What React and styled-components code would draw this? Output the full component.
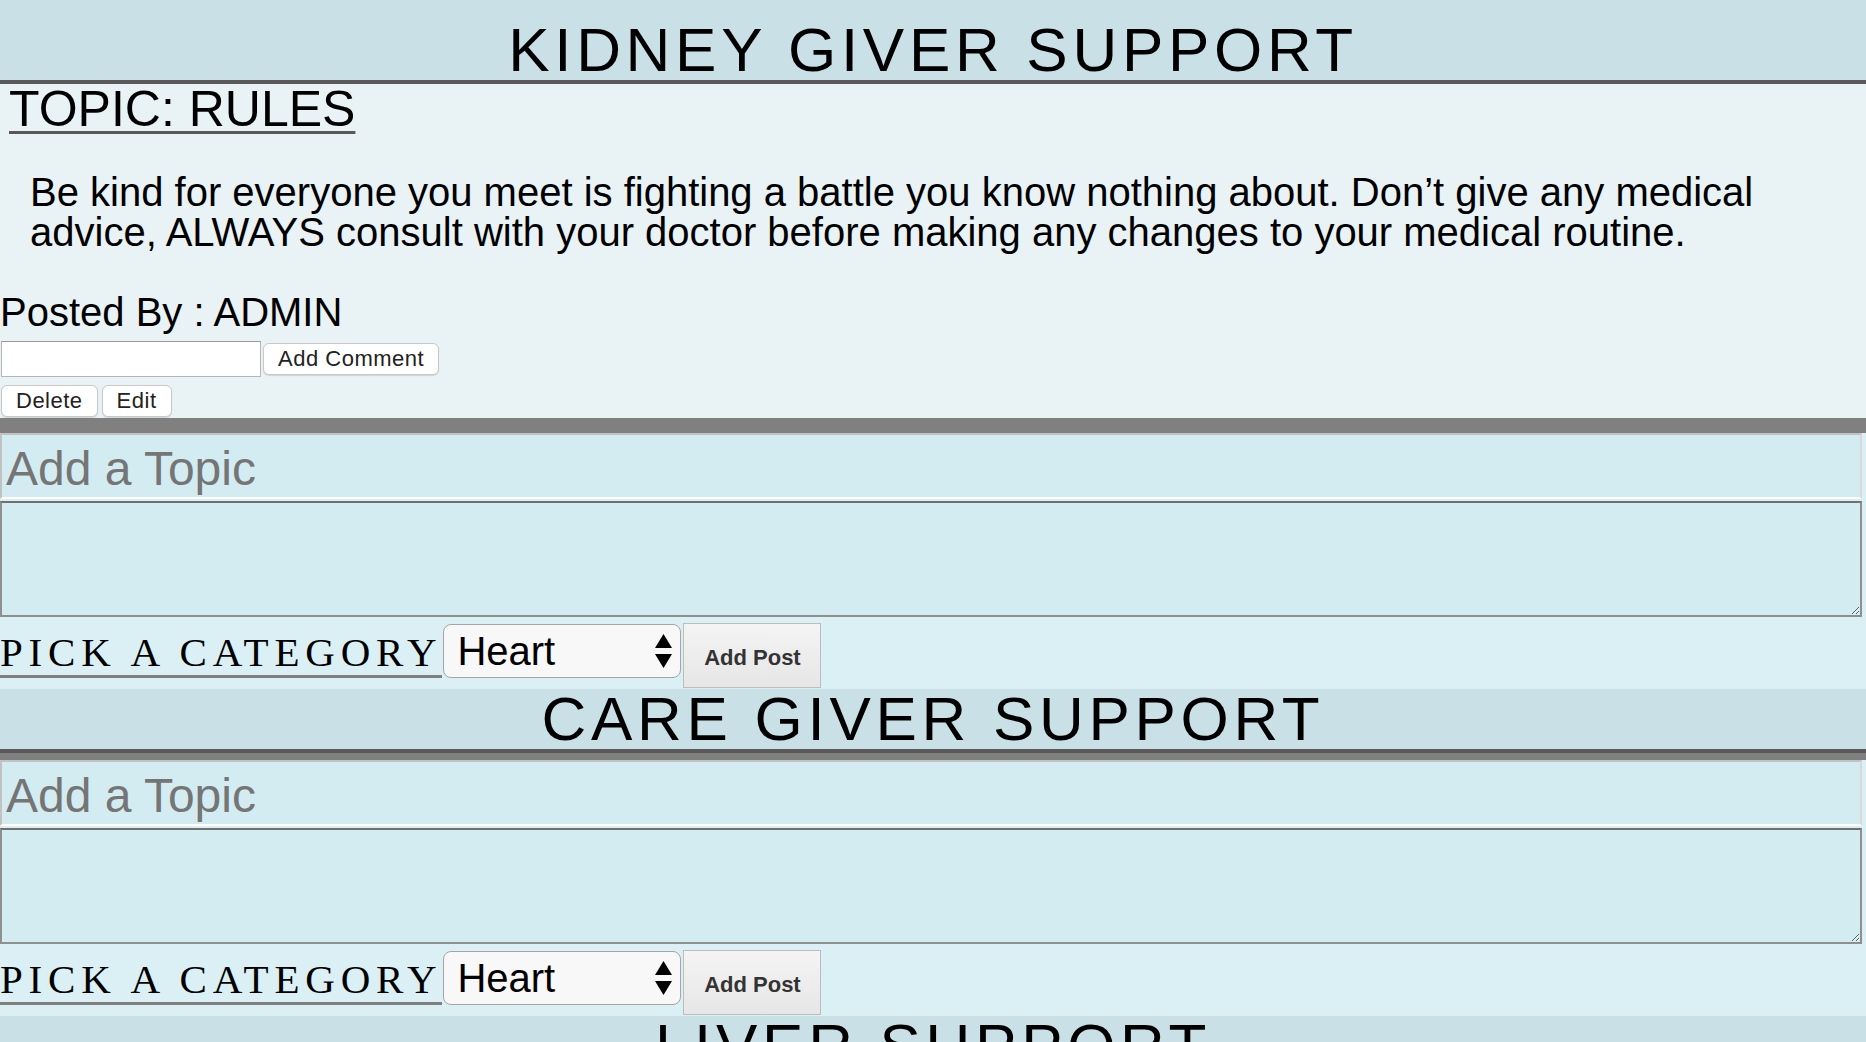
import React from 'react';
import styled, { createGlobalStyle } from 'styled-components';

const GlobalStyle = createGlobalStyle`
  body {
    margin: 0;
    background: #dbf0f5;
    font-family: "Liberation Sans", Arial, sans-serif;
    color: #000;
  }
`;

const sections = [
  {
    title: 'KIDNEY GIVER SUPPORT',
    posts: [
      {
        topic: 'TOPIC: RULES',
        body: 'Be kind for everyone you meet is fighting a battle you know nothing about. Don’t give any medical advice, ALWAYS consult with your doctor before making any changes to your medical routine.',
        author: 'ADMIN',
      },
    ],
  },
  { title: 'CARE GIVER SUPPORT', posts: [] },
  { title: 'LIVER SUPPORT', posts: [] },
];

const categories = ['Heart', 'Kidney', 'Liver', 'Lung', 'Other'];

const SectionHeader = styled.h1`
  margin: 0;
  padding-top: ${(p) => (p.$first ? '20px' : '0')};
  background: #c8e0e6;
  border-bottom: 4px solid #5a5858;
  text-align: center;
  font-size: 62px;
  font-weight: 400;
  line-height: 60px;
  letter-spacing: 4.7px;
`;

const Post = styled.article`
  background: #e9f2f5;
  border-bottom: 8px solid #808080;
  padding-bottom: 1px;
`;

const TopicTitle = styled.h2`
  margin: 0 0 0 9px;
  font-size: 50px;
  font-weight: 400;
  line-height: 50px;
  text-decoration: underline;
  text-decoration-thickness: 3px;
  text-decoration-color: #5a5858;
  text-underline-offset: 5px;
`;

const Rules = styled.p`
  margin: 38px 0 37px;
  padding: 0 30px;
  font-size: 40px;
  line-height: 40px;
`;

const PostedBy = styled.h3`
  margin: 0 0 6px;
  font-size: 40px;
  font-weight: 400;
  line-height: 46px;
`;

const CommentRow = styled.div`
  display: flex;
  align-items: center;
  gap: 2px;
  padding-left: 1px;
`;

const CommentInput = styled.input`
  box-sizing: border-box;
  width: 260px;
  height: 36px;
  margin: 0;
  border: 1px solid #b5b5b5;
  border-top-color: #9a9a9a;
  background: #fff;
`;

const SmallButton = styled.button`
  box-sizing: border-box;
  height: 32px;
  padding: 0 14px;
  border: 1px solid #c9c9c9;
  border-radius: 6px;
  background: #fff;
  box-shadow: 0 1px 1px rgba(0, 0, 0, 0.12);
  font-family: "Liberation Sans", Arial, sans-serif;
  font-size: 22px;
  letter-spacing: 0.5px;
  color: #222;
`;

const Actions = styled.div`
  display: flex;
  gap: 4px;
  margin-top: 8px;
  padding-left: 1px;
`;

const TopicForm = styled.form`
  border-top: 7px solid #808080;
  background: #dbf0f5;
  padding-bottom: 1px;
`;

const TopicInput = styled.input`
  display: block;
  box-sizing: border-box;
  width: calc(100% - 4px);
  height: 66px;
  margin: 0 0 2px;
  padding: 4px 4px 0;
  border: 2px solid;
  border-color: #c2c2c2 #d8d8d8 #fff #c2c2c2;
  background: #d3ecf1;
  font-family: "Liberation Sans", Arial, sans-serif;
  font-size: 48px;
  &::placeholder {
    color: #757575;
  }
`;

const TopicBody = styled.textarea`
  display: block;
  box-sizing: border-box;
  width: calc(100% - 4px);
  height: 116px;
  margin: 0 0 6px;
  border: 2px solid #8f8f8f;
  border-top-color: #707070;
  background: #d3ecf1;
  font-family: "Liberation Sans", Arial, sans-serif;
  font-size: 20px;
`;

const CategoryRow = styled.div`
  display: flex;
  align-items: flex-start;
`;

const CategoryLabel = styled.label`
  margin-top: 6px;
  font-family: "Liberation Serif", "Times New Roman", serif;
  font-size: 41px;
  line-height: 46px;
  letter-spacing: 5.8px;
  border-bottom: 3px solid #808080;
`;

const SelectBox = styled.div`
  position: relative;
  width: 238px;
  height: 54px;
  margin: 1px 0 0 1px;
`;

const Select = styled.select`
  appearance: none;
  box-sizing: border-box;
  width: 100%;
  height: 100%;
  padding: 0 40px 0 13px;
  border: 1.5px solid #a5a5a5;
  border-radius: 8px;
  background: #f8f8f8;
  font-family: "Liberation Sans", Arial, sans-serif;
  font-size: 40px;
  color: #000;
`;

const Arrows = styled.svg`
  position: absolute;
  left: 211px;
  top: 10px;
  pointer-events: none;
`;

const AddPost = styled.button`
  box-sizing: border-box;
  width: 138px;
  height: 65px;
  margin-left: 2px;
  padding: 4px 0 0;
  border: 1px solid #bdbdbd;
  border-radius: 0;
  background: linear-gradient(#f4f4f4, #e6e6e6);
  font-family: "Liberation Sans", Arial, sans-serif;
  font-size: 22px;
  font-weight: 700;
  color: #333;
`;

const PostItem = ({ post }) => (
  <Post>
    <TopicTitle>{post.topic}</TopicTitle>
    <Rules>{post.body}</Rules>
    <PostedBy>Posted By : {post.author}</PostedBy>
    <CommentRow>
      <CommentInput type="text" />
      <SmallButton>Add Comment</SmallButton>
    </CommentRow>
    <Actions>
      <SmallButton>Delete</SmallButton>
      <SmallButton>Edit</SmallButton>
    </Actions>
  </Post>
);

const NewTopic = ({ id }) => (
  <TopicForm onSubmit={(e) => e.preventDefault()}>
    <TopicInput placeholder="Add a Topic" />
    <TopicBody />
    <CategoryRow>
      <CategoryLabel htmlFor={id}>PICK A CATEGORY</CategoryLabel>
      <SelectBox>
        <Select id={id} defaultValue="Heart">
          {categories.map((c) => (
            <option key={c}>{c}</option>
          ))}
        </Select>
        <Arrows width="19" height="34" viewBox="0 0 19 34">
          <polygon points="1,14 9.5,0 18,14" fill="#000" />
          <polygon points="1,20 18,20 9.5,34" fill="#000" />
        </Arrows>
      </SelectBox>
      <AddPost type="submit">Add Post</AddPost>
    </CategoryRow>
  </TopicForm>
);

export default function App() {
  return (
    <>
      <GlobalStyle />
      {sections.map((s, i) => (
        <section key={s.title}>
          <SectionHeader $first={i === 0}>{s.title}</SectionHeader>
          {s.posts.map((p) => (
            <PostItem key={p.topic} post={p} />
          ))}
          <NewTopic id={`category-${i}`} />
        </section>
      ))}
    </>
  );
}
